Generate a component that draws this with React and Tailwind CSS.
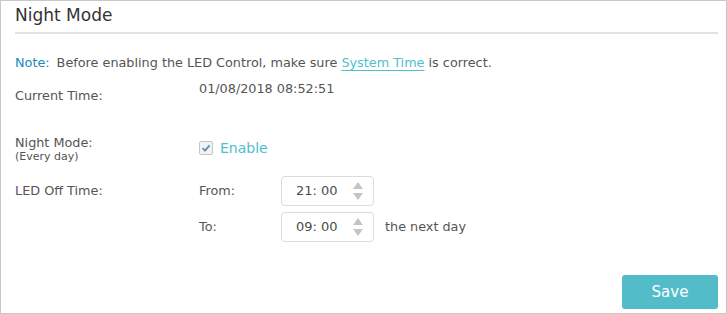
import React from 'react';

const font = { fontFamily: '"DejaVu Sans", Verdana, sans-serif' };

const Spinner = () => (
  <svg width="12" height="20" viewBox="0 0 12 20" className="shrink-0">
    <path d="M6 1 L11 8 L1 8 Z" fill="#c4c4c4" />
    <path d="M1 12 L11 12 L6 19 Z" fill="#c4c4c4" />
  </svg>
);

const TimeInput = ({ value }) => (
  <div className="flex items-center w-[93px] h-[30px] border border-[#dcdcdc] rounded-[4px] pl-[14px] pr-[9px] justify-between text-[13px] text-[#4d4d4d]">
    <span>{value}</span>
    <Spinner />
  </div>
);

export default function App() {
  return (
    <div
      className="w-[727px] h-[314px] bg-white border border-[#c8c8c8] pl-[14px] pr-[8px] text-[#555] text-[12.8px]"
      style={font}
    >
      <div className="h-[33px] border-b-2 border-[#e2e2e2] pt-[4px]">
        <h1 className="text-[17px] leading-[20px] text-[#333]">Night Mode</h1>
      </div>

      <div className="mt-[20px] h-[18px] leading-[18px]">
        <span className="text-[#1a8ab8]">Note:</span>
        <span className="ml-[7px]">Before enabling the LED Control, make sure </span>
        <span className="text-[#4fbfcc] underline underline-offset-[3px] decoration-[#4fbfcc]">System Time</span>
        <span> is correct.</span>
      </div>

      <div className="flex mt-[7px] h-[30px]">
        <div className="w-[184px] pt-[8px] leading-[18px]">Current Time:</div>
        <div className="leading-[18px] pt-[1px]">01/08/2018 08:52:51</div>
      </div>

      <div className="flex mt-[26px] h-[41px]">
        <div className="w-[184px]">
          <div className="leading-[16px]">Night Mode:</div>
          <div className="text-[11px] leading-[12px]">(Every day)</div>
        </div>
        <label className="flex items-center h-[16px] gap-[7px] mt-[5px]">
          <span className="w-[14px] h-[14px] border border-[#c6c6c6] bg-[#f3f3f3] rounded-[2px] flex items-center justify-center">
            <svg width="10" height="10" viewBox="0 0 10 10">
              <path d="M1.5 5.2 L4 7.6 L8.6 2.4" fill="none" stroke="#5b8fb0" strokeWidth="1.8" />
            </svg>
          </span>
          <span className="text-[#4fbfcc] text-[14px]">Enable</span>
        </label>
      </div>

      <div className="flex">
        <div className="w-[184px] pt-[7px] leading-[16px]">LED Off Time:</div>
        <div className="flex flex-col gap-[6px]">
          <div className="flex items-center">
            <span className="w-[82px]">From:</span>
            <TimeInput value="21: 00" />
          </div>
          <div className="flex items-center">
            <span className="w-[82px]">To:</span>
            <TimeInput value="09: 00" />
            <span className="ml-[11px]">the next day</span>
          </div>
        </div>
      </div>

      <div className="flex justify-end mt-[33px]">
        <button className="w-[96px] h-[34px] bg-[#52bdc9] rounded-[3px] text-white text-[15px]">
          Save
        </button>
      </div>
    </div>
  );
}
